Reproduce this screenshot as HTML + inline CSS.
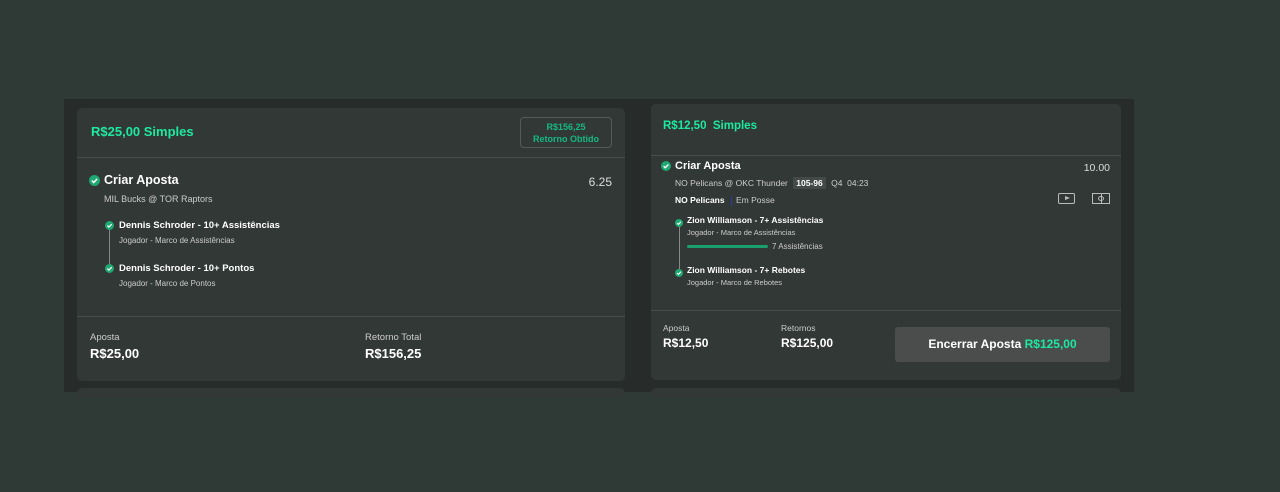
<!DOCTYPE html><html><head><style>
*{margin:0;padding:0;box-sizing:border-box}
body{width:1280px;height:492px;background:#2f3936;font-family:"Liberation Sans",sans-serif;position:relative;overflow:hidden;color:#fff}
.panel{position:absolute;left:64px;top:99px;width:1070px;height:293px;background:#272b29}
.card{position:absolute;background:#323836;border-radius:5px;overflow:hidden}
.g{color:#1de9a0;font-weight:bold}
.abs{position:absolute;white-space:nowrap}
.hr{position:absolute;left:0;right:0;height:1px;background:#464d4a}
svg.chk{position:absolute}
.s{font-size:9px;color:#ccc}
</style></head><body>
<div class="panel"></div>
<div class="card" style="left:77px;top:388px;width:548px;height:10px"></div>
<div class="card" style="left:651px;top:388px;width:470px;height:10px"></div>
<div class="card" style="left:77px;top:108px;width:548px;height:273px">
 <div class="abs g" style="left:14px;top:16px;font-size:13px">R$25,00 Simples</div>
 <div class="abs" style="left:443px;top:9px;width:92px;height:31px;border:1px solid #535b58;border-radius:4px;text-align:center;color:#16b884;font-weight:bold;font-size:9px;line-height:12px;padding-top:3px">R$156,25<br>Retorno Obtido</div>
 <div class="hr" style="top:49px"></div>
 <svg class="chk" style="left:12px;top:67px" width="11" height="11" viewBox="0 0 10 10"><circle cx="5" cy="5" r="5" fill="#1fa872"/><path d="M2.6 5.1L4.3 6.8L7.4 3.5" stroke="#fff" stroke-width="1.4" fill="none"/></svg>
 <div class="abs" style="left:27px;top:65px;font-size:12.5px;font-weight:bold">Criar Aposta</div>
 <div class="abs" style="right:13px;top:67px;font-size:12px;color:#ddd">6.25</div>
 <div class="abs s" style="left:27px;top:86px">MIL Bucks @ TOR Raptors</div>
 <div class="abs" style="left:32px;top:120px;width:1px;height:42px;background:#888"></div>
 <svg class="chk" style="left:28px;top:113px" width="9" height="9" viewBox="0 0 10 10"><circle cx="5" cy="5" r="5" fill="#1fa872"/><path d="M2.6 5.1L4.3 6.8L7.4 3.5" stroke="#fff" stroke-width="1.4" fill="none"/></svg>
 <div class="abs" style="left:42px;top:112px;font-size:9.5px;font-weight:bold">Dennis Schroder - 10+ Assistências</div>
 <div class="abs" style="left:42px;top:128px;font-size:8px;color:#ccc">Jogador - Marco de Assistências</div>
 <svg class="chk" style="left:28px;top:156px" width="9" height="9" viewBox="0 0 10 10"><circle cx="5" cy="5" r="5" fill="#1fa872"/><path d="M2.6 5.1L4.3 6.8L7.4 3.5" stroke="#fff" stroke-width="1.4" fill="none"/></svg>
 <div class="abs" style="left:42px;top:155px;font-size:9.5px;font-weight:bold">Dennis Schroder - 10+ Pontos</div>
 <div class="abs" style="left:42px;top:171px;font-size:8px;color:#ccc">Jogador - Marco de Pontos</div>
 <div class="hr" style="top:208px"></div>
 <div class="abs s" style="left:13px;top:224px;font-size:9.5px">Aposta</div>
 <div class="abs" style="left:13px;top:238px;font-size:13px;font-weight:bold">R$25,00</div>
 <div class="abs s" style="left:288px;top:224px;font-size:9.5px">Retorno Total</div>
 <div class="abs" style="left:288px;top:238px;font-size:13px;font-weight:bold">R$156,25</div>
</div>
<div class="card" style="left:651px;top:104px;width:470px;height:276px">
 <div class="abs g" style="left:12px;top:16px;font-size:11.5px">R$12,50&nbsp; Simples</div>
 <div class="hr" style="top:51px"></div>
 <svg class="chk" style="left:10px;top:57px" width="10" height="10" viewBox="0 0 10 10"><circle cx="5" cy="5" r="5" fill="#1fa872"/><path d="M2.6 5.1L4.3 6.8L7.4 3.5" stroke="#fff" stroke-width="1.4" fill="none"/></svg>
 <div class="abs" style="left:24px;top:56px;font-size:11px;font-weight:bold">Criar Aposta</div>
 <div class="abs" style="right:11px;top:58px;font-size:10.5px;color:#ddd">10.00</div>
 <div class="abs s" style="left:24px;top:74px;font-size:8.5px">NO Pelicans @ OKC Thunder <span style="background:#434a47;color:#fff;font-weight:bold;padding:1px 3px;margin:0 3px">105-96</span> Q4&nbsp; 04:23</div>
 <div class="abs" style="left:24px;top:91px;font-size:8.5px;font-weight:bold">NO Pelicans <span style="display:inline-block;width:1px;height:10px;background:#2a3fa0;vertical-align:middle;margin:0 4px"></span><span style="font-weight:normal;color:#ccc">Em Posse</span></div>
 <div class="abs" style="left:407px;top:89px;width:17px;height:11px;border:1px solid #bbb;border-radius:2px"><div style="position:absolute;left:6px;top:2px;border-left:5px solid #bbb;border-top:2.5px solid transparent;border-bottom:2.5px solid transparent"></div></div>
 <div class="abs" style="left:441px;top:89px;width:18px;height:11px;border:1px solid #bbb"><div style="position:absolute;left:8px;top:0;width:1px;height:9px;background:#bbb"></div><div style="position:absolute;left:5px;top:2px;width:6px;height:5px;border:1px solid #bbb;border-radius:50%"></div></div>
 <div class="abs" style="left:28px;top:122px;width:1px;height:48px;background:#888"></div>
 <svg class="chk" style="left:24px;top:115px" width="8" height="8" viewBox="0 0 10 10"><circle cx="5" cy="5" r="5" fill="#1fa872"/><path d="M2.6 5.1L4.3 6.8L7.4 3.5" stroke="#fff" stroke-width="1.4" fill="none"/></svg>
 <div class="abs" style="left:36px;top:111px;font-size:8.5px;font-weight:bold">Zion Williamson - 7+ Assistências</div>
 <div class="abs" style="left:36px;top:124px;font-size:7.5px;color:#ccc">Jogador - Marco de Assistências</div>
 <div class="abs" style="left:36px;top:141px;width:81px;height:3px;background:#1a9e6e;border-radius:2px"></div>
 <div class="abs" style="left:121px;top:138px;font-size:8px;color:#ccc">7 Assistências</div>
 <svg class="chk" style="left:24px;top:165px" width="8" height="8" viewBox="0 0 10 10"><circle cx="5" cy="5" r="5" fill="#1fa872"/><path d="M2.6 5.1L4.3 6.8L7.4 3.5" stroke="#fff" stroke-width="1.4" fill="none"/></svg>
 <div class="abs" style="left:36px;top:161px;font-size:8.5px;font-weight:bold">Zion Williamson - 7+ Rebotes</div>
 <div class="abs" style="left:36px;top:174px;font-size:7.5px;color:#ccc">Jogador - Marco de Rebotes</div>
 <div class="hr" style="top:206px"></div>
 <div class="abs s" style="left:12px;top:219px;font-size:8.5px">Aposta</div>
 <div class="abs" style="left:12px;top:232px;font-size:12px;font-weight:bold">R$12,50</div>
 <div class="abs s" style="left:130px;top:219px;font-size:8.5px">Retornos</div>
 <div class="abs" style="left:130px;top:232px;font-size:12px;font-weight:bold">R$125,00</div>
 <div class="abs" style="left:244px;top:223px;width:215px;height:35px;background:#4a4d4c;border-radius:3px;text-align:center;line-height:35px;font-size:12px;font-weight:bold">Encerrar Aposta <span class="g">R$125,00</span></div>
</div>
</body></html>
